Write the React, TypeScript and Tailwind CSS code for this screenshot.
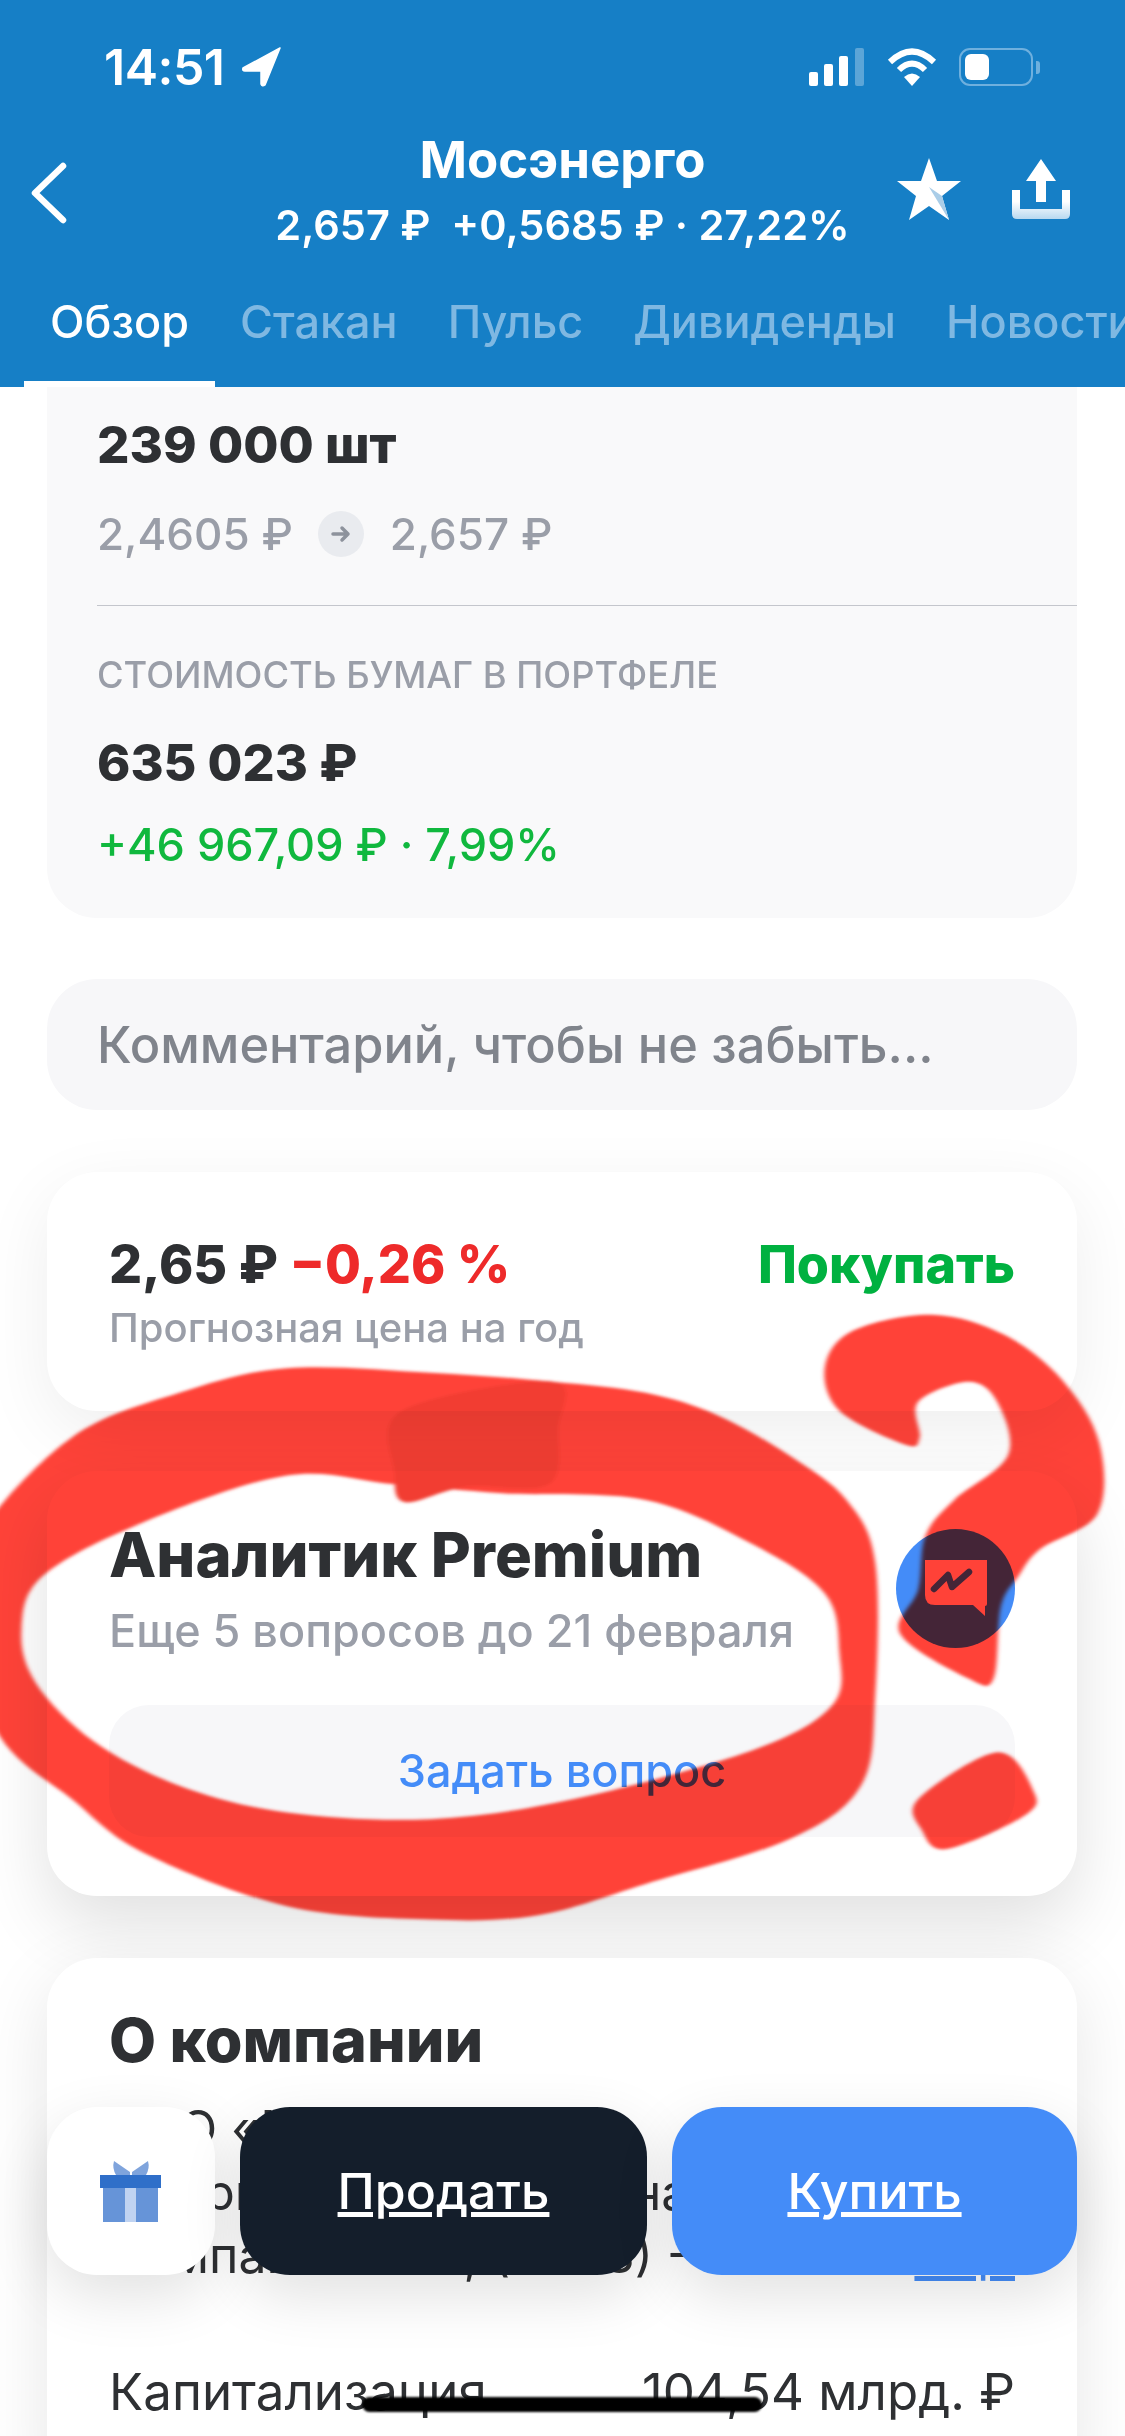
import React from "react";

const smooth = (p: number[][]) => {
  const n = p.length;
  let d = `M${p[0][0]} ${p[0][1]}`;
  for (let i = 0; i < n; i++) {
    const a = p[(i - 1 + n) % n], b = p[i], c = p[(i + 1) % n], e = p[(i + 2) % n];
    d += `C${b[0] + (c[0] - a[0]) / 6} ${b[1] + (c[1] - a[1]) / 6} ${c[0] - (e[0] - b[0]) / 6} ${c[1] - (e[1] - b[1]) / 6} ${c[0]} ${c[1]}`;
  }
  return d + "Z";
};

const ringOuter = [[-60,830],[-30,640],[100,420],[250,320],[400,265],[600,275],[770,295],[900,320],[1000,370],[1100,460],[1180,560],[1220,700],[1220,1000],[1200,1200],[1100,1320],[900,1420],[750,1490],[600,1500],[400,1470],[200,1350],[100,1230],[0,1090]];
const ringInner = [[30,850],[60,730],[200,610],[400,505],[550,525],[700,545],[900,560],[1050,660],[1150,770],[1170,900],[1160,1020],[1050,1120],[800,1230],[600,1275],[400,1260],[250,1200],[130,1100],[50,970]];
const hook = [[1262,436],[1170,360],[1150,260],[1190,180],[1300,145],[1400,190],[1480,290],[1532,430],[1530,590],[1450,670],[1420,730],[1395,800],[1385,960],[1350,960],[1255,860],[1280,760],[1290,640],[1330,560],[1405,460],[1390,340],[1350,295],[1280,340],[1282,420]];
const dot = [[1280,1230],[1390,1125],[1440,1210],[1430,1265],[1320,1342],[1285,1300]];
const overlap = [[550,500],[560,360],[770,295],[778,400],[765,525],[650,530],[565,565]];

const Marks = () => (
  <svg className="absolute left-0 top-[1250px] mix-blend-multiply pointer-events-none" width="1125" height="700" viewBox="0 0 1125 700">
    <defs>
      <filter id="soft" x="-10%" y="-10%" width="120%" height="120%">
        <feGaussianBlur stdDeviation="3" />
      </filter>
    </defs>
    <g filter="url(#soft)" transform="scale(0.7174 0.4464)">
      <path d={smooth(ringOuter) + smooth(ringInner)} fill="#ff4339" fillRule="evenodd" />
      <path d={smooth(overlap)} fill="#f23c32" />
      <path d={smooth(hook)} fill="#ff4339" />
      <path d={smooth(dot)} fill="#ff4339" />
    </g>
  </svg>
);

const StatusBar = () => (
  <div className="h-[130px] flex items-center justify-between pl-[104px] pr-[85px] pt-[4px]">
    <div className="flex items-center gap-[18px]">
      <span className="text-[50px] font-semibold leading-none tracking-[-0.5px] text-white">14:51</span>
      <svg width="40" height="40" viewBox="0 0 40 40"><path d="M38 1 L1 21 Q0 24 3 24 L19 24 L19 37 Q20 40 23 38 Z" fill="#fff" stroke="#fff" strokeWidth="1.5" strokeLinejoin="round" /></svg>
    </div>
    <div className="flex items-center gap-[22px]">
      <svg width="56" height="38" viewBox="0 0 56 38">
        <rect x="0" y="24" width="9" height="14" rx="2" fill="#fff" />
        <rect x="15" y="16" width="9" height="22" rx="2" fill="#fff" />
        <rect x="30" y="8" width="9" height="30" rx="2" fill="#fff" />
        <rect x="46" y="0" width="9" height="38" rx="2" fill="#fff" fillOpacity="0.3" />
      </svg>
      <svg width="50" height="38" viewBox="0 0 50 38" fill="none" stroke="#fff" strokeWidth="6">
        <path d="M3 14 Q25 -7 47 14" />
        <path d="M12 22 Q25 9 38 22" />
        <path d="M25 38 L17 29 Q25 22 33 29 Z" fill="#fff" stroke="none" />
      </svg>
      <div className="flex items-center gap-[3px]">
        <div className="w-[74px] h-[38px] rounded-[11px] border-[2px] border-[#6fb0de] p-[4px] flex">
          <div className="w-[24px] bg-white rounded-[6px]"></div>
        </div>
        <div className="w-[4px] h-[13px] rounded-r-[3px] bg-[#6fb0de]"></div>
      </div>
    </div>
  </div>
);

const NavRow = () => (
  <div className="flex items-center h-[125px]">
    <div className="w-[170px] pl-[30px] flex">
      <svg width="38" height="62" viewBox="0 0 38 62" fill="none" stroke="#fff" strokeWidth="6.5" strokeLinecap="round" strokeLinejoin="round"><path d="M33 4 L5 31 L33 58" /></svg>
    </div>
    <div className="flex-1 text-center text-white whitespace-pre">
      <div className="text-[51px] leading-[60px] font-bold">Мосэнерго</div>
      <div className="mt-[5px] text-[41.5px] leading-[60px] font-semibold">2,657 ₽  +0,5685 ₽ · 27,22%</div>
    </div>
    <div className="w-[170px] flex items-center justify-end gap-[50px] pr-[55px] pb-[8px]">
      <svg width="66" height="64" viewBox="0 0 66 64" className="shrink-0">
        <path d="M33 1 L41 24 L65 24 L46 39 L53 63 L33 49 L13 63 L20 39 L1 24 L25 24 Z" fill="#fff" />
        <path d="M33 30 L46 39 L53 63 Z" fill="#a9cde8" />
      </svg>
      <svg width="58" height="60" viewBox="0 0 58 60" className="shrink-0">
        <defs><linearGradient id="tray" x1="0" y1="0" x2="0" y2="1"><stop offset="0.4" stopColor="#fff" /><stop offset="1" stopColor="#b7d8f0" /></linearGradient></defs>
        <path d="M29 0 L44 22 L34 22 L34 43 L24 43 L24 22 L14 22 Z" fill="#fff" />
        <path d="M0 31 L8 31 L8 50 L50 50 L50 31 L58 31 L58 55 Q58 60 53 60 L5 60 Q0 60 0 55 Z" fill="url(#tray)" />
      </svg>
    </div>
  </div>
);

const tabs = ["Стакан", "Пульс", "Дивиденды", "Новости"];

const Header = () => (
  <div className="h-[387px] bg-[#167fc6] shrink-0 overflow-hidden">
    <StatusBar />
    <NavRow />
    <div className="flex pl-[24px] h-[132px] whitespace-nowrap">
      <div className="px-[26px] pt-[8px] flex items-center border-b-[6px] border-white text-white text-[45px] font-medium">Обзор</div>
      {tabs.map((t) => (
        <div key={t} className="px-[25px] pt-[8px] flex items-center border-b-[6px] border-transparent text-[#7fb8e2] text-[45px] font-medium">{t}</div>
      ))}
    </div>
  </div>
);

const Position = () => (
  <div className="bg-[#f9f9fa] rounded-b-[50px] pl-[50px] pt-[28px] pb-[43px]">
    <div className="text-[51px] leading-[60px] font-extrabold text-[#2e3033]">239 000 шт</div>
    <div className="mt-[29px] h-[60px] flex items-center text-[44px] text-[#9a9ea8] font-medium">
      <span>2,4605 ₽</span>
      <span className="ml-[25px] mr-[26px] w-[46px] h-[46px] rounded-full bg-[#e9ebef] flex items-center justify-center">
        <svg width="20" height="20" viewBox="0 0 20 20" fill="none" stroke="#8d929c" strokeWidth="3.5" strokeLinecap="round" strokeLinejoin="round"><path d="M2 10 H17 M11 4 L17 10 L11 16" /></svg>
      </span>
      <span>2,657 ₽</span>
    </div>
    <div className="mt-[41px] h-px bg-[#c4c6cc]"></div>
    <div className="mt-[49px] text-[36.3px] leading-[40px] font-medium text-[#9a9ea8]">СТОИМОСТЬ БУМАГ В ПОРТФЕЛЕ</div>
    <div className="mt-[38px] text-[50.5px] leading-[60px] font-extrabold text-[#2e3033]">635 023 ₽</div>
    <div className="mt-[22px] text-[45px] leading-[60px] font-medium text-[#10b83e]">+46 967,09 ₽ · 7,99%</div>
  </div>
);

const Forecast = () => (
  <div className="mt-[62px] h-[239px] bg-white rounded-[50px] px-[62px] pt-[63px] shadow-[0_20px_70px_rgba(0,0,0,0.07)]">
    <div className="flex justify-between text-[52px] leading-[60px] font-extrabold">
      <div className="text-[#2e3033]">2,65 ₽ <span className="text-[#ee2a2a]">−0,26 %</span></div>
      <div className="text-[#00b140]">Покупать</div>
    </div>
    <div className="mt-[11px] text-[40px] leading-[44px] font-medium text-[#9a9ea8]">Прогнозная цена на год</div>
  </div>
);

const Analyst = () => (
  <div className="mt-[60px] h-[425px] bg-white rounded-[50px] px-[62px] pt-[49px] shadow-[0_30px_70px_rgba(0,0,0,0.12)]">
    <div className="flex items-center justify-between">
      <div>
        <div className="text-[61.5px] leading-[70px] font-extrabold text-[#2e3033]">Аналитик Premium</div>
        <div className="mt-[16px] text-[45px] leading-[50px] font-medium text-[#9a9ea8]">Еще 5 вопросов до 21 февраля</div>
      </div>
      <div className="w-[119px] h-[119px] rounded-full bg-[#448cf8] flex items-center justify-center">
        <svg width="66" height="60" viewBox="0 0 66 60">
          <path d="M2 2 L64 2 L64 46 Q64 48 62 48 Q62 52 62 58 L50 47 L12 47 Q2 47 2 37 Z" fill="#fff" />
          <path d="M11 31 L25 17 L29 29 L46 14" fill="none" stroke="#448cf8" strokeWidth="6.5" strokeLinecap="round" strokeLinejoin="round" />
        </svg>
      </div>
    </div>
    <div className="mt-[49px] h-[132px] rounded-[40px] bg-[#f7f7f9] flex items-center justify-center text-[45px] font-medium text-[#448cf8]">Задать вопрос</div>
  </div>
);

const Company = () => (
  <div className="mt-[62px] bg-white rounded-t-[50px] px-[62px] pt-[47px] pb-[60px] shadow-[0_20px_70px_rgba(0,0,0,0.1)]">
    <div className="text-[61px] leading-[70px] font-extrabold text-[#2e3033]">О компании</div>
    <div className="mt-[23px] text-[50px] leading-[63px] text-[#2e3033] whitespace-nowrap">
      <div>ПАО «Мосэнерго»</div>
      <div>Энергетическая частная</div>
      <div className="flex justify-between">
        <span>Компания Эон, (2008) -</span>
        <span className="text-[#448cf8] underline">Ещё</span>
      </div>
    </div>
    <div className="mt-[75px] flex justify-between text-[51px] leading-[60px] text-[#2e3033] whitespace-nowrap">
      <span>Капитализация</span>
      <span>104,54 млрд. ₽</span>
    </div>
  </div>
);

const BottomBar = () => (
  <div className="absolute left-[47px] top-[2107px] flex gap-[25px]">
    <div className="w-[168px] h-[168px] rounded-[50px] bg-white flex items-center justify-center shadow-[0_20px_60px_rgba(0,0,0,0.12)]">
      <svg width="62" height="62" viewBox="0 0 62 62">
        <path d="M14 1 L30 12 L30 15 L16 15 Q12 8 14 1 Z M48 1 L32 12 L32 15 L46 15 Q50 8 48 1 Z" fill="#7fa4dc" />
        <rect x="3" y="27" width="55" height="35" fill="#6694d8" />
        <rect x="25" y="27" width="11" height="35" fill="#c0d3f1" />
        <rect x="0" y="15" width="61" height="13" fill="#2f6fc9" />
      </svg>
    </div>
    <div className="w-[407px] h-[168px] rounded-[50px] bg-[#141e2b] flex items-center justify-center text-[50px] font-medium text-white underline shadow-[0_20px_60px_rgba(0,0,0,0.12)]">Продать</div>
    <div className="w-[405px] h-[168px] rounded-[50px] bg-[#448cf8] flex items-center justify-center text-[50px] font-medium text-white underline shadow-[0_20px_60px_rgba(0,0,0,0.12)]">Купить</div>
  </div>
);

export default function App() {
  return (
    <div className="relative w-[1125px] h-[2436px] overflow-hidden bg-white flex flex-col font-['Inter','Noto_Sans',sans-serif]">
      <Header />
      <div className="pr-[48px] pl-[47px] flex flex-col">
        <Position />
        <div className="mt-[61px] h-[131px] rounded-[50px] bg-[#f7f7f9] flex items-center px-[50px] text-[50.5px] font-medium text-[#80848c] whitespace-nowrap">Комментарий, чтобы не забыть...</div>
        <Forecast />
        <Analyst />
        <Company />
      </div>
      <Marks />
      <BottomBar />
      <div className="absolute left-[362px] top-[2397px] w-[400px] h-[15px] rounded-full bg-black blur-[1px]"></div>
    </div>
  );
}
